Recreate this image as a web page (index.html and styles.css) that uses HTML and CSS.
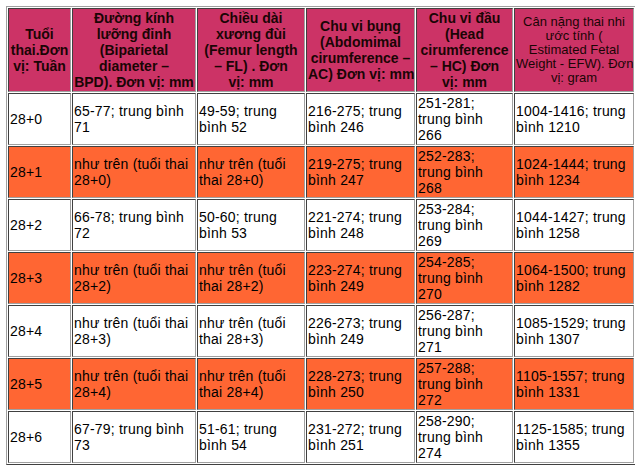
FILE: index.html
```html
<!DOCTYPE html>
<html lang="vi">
<head>
<meta charset="utf-8">
<title>Bảng chỉ số thai nhi</title>
<link rel="stylesheet" href="styles.css">
</head>
<body>
<table class="grid">
  <colgroup>
    <col class="c1"><col class="c2"><col class="c3"><col class="c4"><col class="c5"><col class="c6">
  </colgroup>
  <thead>
    <tr class="head">
      <th>Tuổi thai.Đơn vị:&nbsp;Tuần</th>
      <th>Đường kính lưỡng đỉnh (Biparietal diameter –<br><span class="nw">BPD). Đơn vị: mm</span></th>
      <th>Chiều dài xương đùi (Femur length – FL) . Đơn vị:&nbsp;mm</th>
      <th>Chu vi bụng (Abdomimal cirumference – <span class="nw">AC) Đơn vị: mm</span></th>
      <th>Chu vi đầu (Head cirumference – HC) Đơn vị:&nbsp;mm</th>
      <th class="light">Cân nặng thai nhi ước tính ( Estimated Fetal <span class="nw">Weight - EFW). Đơn</span> vị: gram</th>
    </tr>
  </thead>
  <tbody>
    <tr class="even">
      <td>28+0</td><td>65-77; trung bình 71</td><td>49-59; trung bình 52</td><td>216-275; trung bình 246</td><td>251-281; trung bình 266</td><td>1004-1416; trung bình 1210</td>
    </tr>
    <tr class="odd">
      <td>28+1</td><td>như trên (tuổi thai 28+0)</td><td>như trên (tuổi thai 28+0)</td><td>219-275; trung bình 247</td><td>252-283; trung bình 268</td><td>1024-1444; trung bình 1234</td>
    </tr>
    <tr class="even">
      <td>28+2</td><td>66-78; trung bình 72</td><td>50-60; trung bình 53</td><td>221-274; trung bình 248</td><td>253-284; trung bình 269</td><td>1044-1427; trung bình 1258</td>
    </tr>
    <tr class="odd">
      <td>28+3</td><td>như trên (tuổi thai 28+2)</td><td>như trên (tuổi thai 28+2)</td><td>223-274; trung bình 249</td><td>254-285; trung bình 270</td><td>1064-1500; trung bình 1282</td>
    </tr>
    <tr class="even">
      <td>28+4</td><td>như trên (tuổi thai 28+3)</td><td>như trên (tuổi thai 28+3)</td><td>226-273; trung bình 249</td><td>256-287; trung bình 271</td><td>1085-1529; trung bình 1307</td>
    </tr>
    <tr class="odd">
      <td>28+5</td><td>như trên (tuổi thai 28+4)</td><td>như trên (tuổi thai 28+4)</td><td>228-273; trung bình 250</td><td>257-288; trung bình 272</td><td>1105-1557; trung bình 1331</td>
    </tr>
    <tr class="even">
      <td>28+6</td><td>67-79; trung bình 73</td><td>51-61; trung bình 54</td><td>231-272; trung bình 251</td><td>258-290; trung bình 274</td><td>1125-1585; trung bình 1355</td>
    </tr>
  </tbody>
</table>
</body>
</html>
```
FILE: styles.css
```css
html, body {
  background: #ffffff;
}
body {
  margin: 6px;
  font-family: "Liberation Sans", Arial, sans-serif;
  color: #000;
}
.grid {
  table-layout: fixed;
  width: 630px;
  border-collapse: separate;
  border-spacing: 1px;
  border: 1px solid;
  border-color: #a0a0a0 #404040 #404040 #a0a0a0;
}
.c1 { width: 63px; }
.c2 { width: 124px; }
.c3 { width: 108px; }
.c4 { width: 109px; }
.c5 { width: 97px; }
.c6 { width: 120px; }
.grid th,
.grid td {
  padding: 1px;
  border: 1px solid;
  border-color: #404040 #a0a0a0 #a0a0a0 #404040;
  vertical-align: middle;
}
.grid th {
  background: #cc3366;
  color: #1a0505;
  font-size: 14px;
  line-height: 16px;
  font-weight: bold;
  text-align: center;
}
.grid th.light {
  font-weight: normal;
  font-size: 13px;
  line-height: 14px;
}
.nw {
  white-space: nowrap;
}
.grid td {
  font-size: 14px;
  line-height: 16px;
  letter-spacing: 0.2px;
  text-align: left;
  height: 48px;
}
.even td {
  background: #ffffff;
}
.odd td {
  background: #ff6633;
}
```
